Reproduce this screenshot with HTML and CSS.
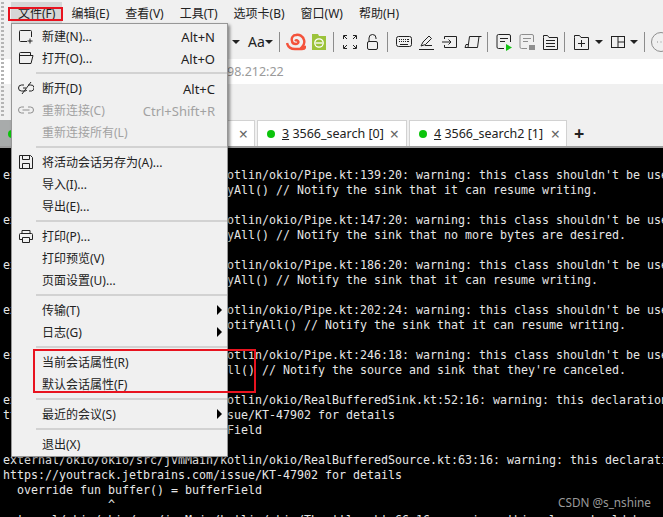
FILE: index.html
```html
<!DOCTYPE html>
<html lang="zh">
<head>
<meta charset="utf-8">
<title>Xshell</title>
<link rel="stylesheet" href="styles.css">
</head>
<body>
<div class="app">
  <header class="chrome">
    <nav class="menubar">
      <span class="mi on">文件(F)</span><span class="mi">编辑(E)</span><span class="mi">查看(V)</span><span class="mi">工具(T)</span><span class="mi">选项卡(B)</span><span class="mi">窗口(W)</span><span class="mi">帮助(H)</span>
    </nav>
    <div class="toolbar">
      <i class="caret first"></i>
      <span class="aa">Aa</span>
      <i class="caret"></i>
      <i class="sep"></i>
      <span class="cell"><svg width="20" height="18" viewBox="0 0 20 18"><path d="M1 10c1 4 4 6 8 6h7c2 0 3-1 3-2h-3c2-2 3-4 2-7-1-4-5-6-8-5-3 0-5 3-4 6 0 2 2 3 4 3s3-2 2-3-2-1-3 0" fill="none" stroke="#f4523b" stroke-width="2.4"/></svg></span>
      <span class="cell"><svg width="18" height="18" viewBox="0 0 18 18"><path d="M2 1h6l1 2h7v14H2z" fill="#9cc33b"/><circle cx="9" cy="10" r="4.2" fill="none" stroke="#fff" stroke-width="1.3"/><path d="M5.500 10h7" stroke="#fff" stroke-width="1.3"/></svg></span>
      <i class="sep"></i>
      <span class="cell"><svg width="18" height="18" viewBox="0 0 18 18" class="ln"><path d="M2.500 6V2.500H6M12 2.500h3.500V6M2.500 12v3.500H6M15.500 12v3.500H12M3 3l3 3M15 3l-3 3M3 15l3-3M15 15l-3-3"/></svg></span>
      <span class="cell"><svg width="18" height="18" viewBox="0 0 18 18" class="ln"><rect x="3.500" y="8.500" width="10" height="8" rx="1.500"/><path d="M5 8.500V5a3.500 3.500 0 0 1 7 0v1"/></svg></span>
      <i class="sep"></i>
      <span class="cell"><svg width="18" height="18" viewBox="0 0 18 18" class="ln"><rect x="1.500" y="3.500" width="15" height="10" rx="2"/><path d="M4 6.500h1M6 6.500h1M8 6.500h1M10 6.500h1M12 6.500h2M4 8.500h1M6 8.500h1M8 8.500h1M10 8.500h1M12 8.500h2M5 11.500h8"/></svg></span>
      <span class="cell"><svg width="18" height="18" viewBox="0 0 18 18" class="ln"><path d="M1 16.500h15M3 13l2-4 6-6 2.500 2.500-6 6zM7 12.500h7"/></svg></span>
      <span class="cell"><svg width="18" height="18" viewBox="0 0 18 18" class="ln"><path d="M3.500 6V3.500h12v11h-12V12M1 9h9M7.500 6.500 10 9l-2.500 2.500"/></svg></span>
      <span class="cell"><svg width="18" height="18" viewBox="0 0 18 18" class="ln"><path d="M5.500 3.500h12M5.500 3.500 4 14.500h9.500L15 3.500M4 14.500H1l1-3h2"/></svg></span>
      <i class="sep"></i>
      <span class="cell"><svg width="18" height="18" viewBox="0 0 18 18" class="ln"><path d="M9 15.500H3.500a1.500 1.500 0 0 1-1.500-1.500V3a1.500 1.500 0 0 1 1.500-1.500h10.500A1.500 1.500 0 0 1 15.500 3v6M5 5.500h8M5 8.500h5"/><path d="M11 11l6 3.500-6 3.500z" fill="#14c414" stroke="none"/></svg></span>
      <span class="cell"><svg width="18" height="18" viewBox="0 0 18 18" class="ln dim"><path d="M9 15.500H3.500a1.500 1.500 0 0 1-1.500-1.500V3a1.500 1.500 0 0 1 1.500-1.500h10.500A1.500 1.500 0 0 1 15.500 3v6M5 5.500h8M5 8.500h5"/><rect x="11" y="12" width="6" height="5" fill="#8e8e8e" stroke="none"/></svg></span>
      <span class="cell"><svg width="18" height="18" viewBox="0 0 18 18" class="ln"><path d="M2.500 4.500V16.500h14V4.500H8l-1.500-2h-4zM5 7.500h9M5 10.500h9M5 13.500h9"/></svg></span>
      <i class="sep"></i>
      <span class="cell"><svg width="18" height="18" viewBox="0 0 18 18" class="ln"><path d="M2.500 4.500V16.500h14V4.500H9l-1.500-2h-5zM9.500 7v7M6 10.500h7"/></svg></span>
      <i class="caret after-folder"></i>
      <span class="cell after-caret"><svg width="18" height="18" viewBox="0 0 18 18" class="ln"><rect x="2.500" y="3.500" width="13" height="11"/><path d="M9 3.500v11M9 9h6.500"/></svg></span>
      <i class="caret"></i>
      <i class="sep"></i>
      <span class="cell"><svg width="22" height="22" viewBox="0 0 22 22" class="ln dim"><circle cx="11" cy="11" r="9.500"/><path d="M7 11h1M10.500 11h1M14 11h1"/></svg></span>
    </div>
    <div class="address">98.212:22</div>
    <div class="spacer"></div>
    <div class="tabs">
      <div class="tab active"><i class="dot"></i></div>
      <div class="tab t2"><span class="x">×</span></div>
      <div class="tab t3"><i class="dot"></i><span class="label"><u>3</u> 3566_search [0]</span><span class="x">×</span></div>
      <div class="tab t4"><i class="dot"></i><span class="label"><u>4</u> 3566_search2 [1]</span><span class="x">×</span></div>
      <span class="plus">+</span>
    </div>
  </header>
  <pre class="terminal">

external/okio/okio/src/jvmMain/kotlin/okio/Pipe.kt:139:20: warning: this class shouldn't be used in Kotlin
                           notifyAll() // Notify the sink that it can resume writing.

external/okio/okio/src/jvmMain/kotlin/okio/Pipe.kt:147:20: warning: this class shouldn't be used in Kotlin
                           notifyAll() // Notify the sink that no more bytes are desired.

external/okio/okio/src/jvmMain/kotlin/okio/Pipe.kt:186:20: warning: this class shouldn't be used in Kotlin
                           notifyAll() // Notify the sink that it can resume writing.

external/okio/okio/src/jvmMain/kotlin/okio/Pipe.kt:202:24: warning: this class shouldn't be used in Kotlin
                               notifyAll() // Notify the sink that it can resume writing.

external/okio/okio/src/jvmMain/kotlin/okio/Pipe.kt:246:18: warning: this class shouldn't be used in Kotlin
                         notifyAll() // Notify the source and sink that they're canceled.

external/okio/okio/src/jvmMain/kotlin/okio/RealBufferedSink.kt:52:16: warning: this declaration is deprecated
ttps://youtrack.jetbrains.com/issue/KT-47902 for details
  override fun buffer() = bufferField

external/okio/okio/src/jvmMain/kotlin/okio/RealBufferedSource.kt:63:16: warning: this declaration is deprecated
https://youtrack.jetbrains.com/issue/KT-47902 for details
  override fun buffer() = bufferField
               ^
external/okio/okio/src/jvmMain/kotlin/okio/Throttler.kt:66:16: warning: this class should be used</pre>

  <div class="menu">
    <div class="row"><span class="ico"><svg width="16" height="16" viewBox="0 0 16 16" class="ln"><path d="M9 13.500H2.500a1 1 0 0 1-1-1v-9a1 1 0 0 1 1-1h10a1 1 0 0 1 1 1V9M12 10.500v5M9.500 13h5"/></svg></span><span>新建(N)...</span><span class="key">Alt+N</span></div>
    <div class="row"><span class="ico"><svg width="16" height="16" viewBox="0 0 16 16" class="ln"><path d="M1.500 13.500v-10a1 1 0 0 1 1-1h10v3M1.500 5.500h13.500l-2 8h-11.500"/></svg></span><span>打开(O)...</span><span class="key">Alt+O</span></div>
    <div class="rule"></div>
    <div class="row"><span class="ico"><svg width="16" height="16" viewBox="0 0 16 16" class="ln"><path d="M6 5H3.500a3 3 0 0 0 0 6H7a3 3 0 0 0 2-1M5 8h3M10 5h2.500a3 3 0 0 1 1 6H11M4 14 13 2"/></svg></span><span>断开(D)</span><span class="key">Alt+C</span></div>
    <div class="row off"><span class="ico"><svg width="16" height="16" viewBox="0 0 16 16" class="ln dim"><path d="M6 5H3.500a3 3 0 0 0 0 6H6M10 5h2.500a3 3 0 0 1 0 6H10M4.500 8h7"/></svg></span><span>重新连接(C)</span><span class="key">Ctrl+Shift+R</span></div>
    <div class="row off"><span class="ico"></span><span>重新连接所有(L)</span></div>
    <div class="rule"></div>
    <div class="row"><span class="ico"><svg width="16" height="16" viewBox="0 0 16 16" class="ln"><path d="M1.500 1.500h11l2 2v11h-13zM4.500 1.500v4h7v-4M4.500 14.500v-5h7v5"/></svg></span><span>将活动会话另存为(A)...</span></div>
    <div class="row"><span class="ico"></span><span>导入(I)...</span></div>
    <div class="row"><span class="ico"></span><span>导出(E)...</span></div>
    <div class="rule"></div>
    <div class="row"><span class="ico"><svg width="16" height="16" viewBox="0 0 16 16" class="ln"><path d="M4 5.500v-3h8v3M4 11.500H1.500v-5a1 1 0 0 1 1-1h11a1 1 0 0 1 1 1v5H12M4.500 9.500h7v5h-7z"/></svg></span><span>打印(P)...</span></div>
    <div class="row"><span class="ico"></span><span>打印预览(V)</span></div>
    <div class="row"><span class="ico"></span><span>页面设置(U)...</span></div>
    <div class="rule"></div>
    <div class="row"><span class="ico"></span><span>传输(T)</span><i class="arrow"></i></div>
    <div class="row"><span class="ico"></span><span>日志(G)</span><i class="arrow"></i></div>
    <div class="rule"></div>
    <div class="row"><span class="ico"></span><span>当前会话属性(R)</span></div>
    <div class="row"><span class="ico"></span><span>默认会话属性(F)</span></div>
    <div class="rule"></div>
    <div class="row"><span class="ico"></span><span>最近的会议(S)</span><i class="arrow"></i></div>
    <div class="rule"></div>
    <div class="row"><span class="ico"></span><span>退出(X)</span></div>
  </div>
  <div class="mark mark-file"></div>
  <div class="mark mark-props"></div>
  <div class="watermark">CSDN @s_nshine</div>
</div>
</body>
</html>
```
FILE: styles.css
```css
* { box-sizing: border-box; }
html, body { margin: 0; padding: 0; height: 100%; overflow: hidden; }
body { background: #000; font-family: "Noto Sans", "Noto Sans CJK SC", sans-serif; font-size: 12px; color: #222; }
.app { position: relative; width: 663px; height: 517px; overflow: hidden; display: flex; flex-direction: column; }
.chrome { position: relative; height: 148px; background: #f0f0f0; flex: none; }
.chrome::before { content: ""; position: absolute; left: 1px; top: 2px; width: 3px; height: 116px; background: repeating-linear-gradient(to bottom, #b4b4b4 0 2px, transparent 2px 4px); }

.menubar { height: 24px; display: flex; gap: 2px; padding: 2px 0 0 11px; }
.mi { height: 21px; padding: 3px 7px 0; line-height: 18px; white-space: nowrap; }
.mi.on { background: #d6d6d6; }

.toolbar { height: 35px; display: flex; align-items: center; padding-left: 232px; }
.caret { flex: none; width: 8px; height: 4px; margin-top: 1px; border-top: 4px solid #222; border-left: 4px solid transparent; border-right: 4px solid transparent; }
.caret.first { margin-right: 8px; }
.caret.after-folder { margin-left: 2px; }
.cell.after-caret { margin-left: 4px; }
.aa { width: 19px; font-size: 14px; line-height: 20px; white-space: nowrap; }
.sep { flex: none; width: 1px; height: 20px; background: #8c8c8c; margin: 0 5px 0 6px; }
.cell + .sep { margin-left: 2px; }
.cell { flex: none; width: 23px; height: 24px; display: flex; align-items: center; justify-content: center; }
.cell svg { display: block; flex: none; }
.ln { fill: none; stroke: #222; stroke-width: 1; display: block; }
.ln.dim { stroke: #8e8e8e; }

.address { height: 25px; background: #fff; padding-left: 227px; font-size: 12.5px; line-height: 25px; color: #9a9a9a; }
.spacer { height: 36px; }

.tabs { height: 28px; display: flex; gap: 2px; border-bottom: 2px solid #9c9c9c; align-items: stretch; }
.tab { background: #fff; border: 1px solid #d2d2d2; border-bottom: 0; display: flex; align-items: center; white-space: nowrap; }
.tab.active { width: 120px; background: #a8abab; border-color: #a8abab; padding-left: 7px; }
.tab.t2 { width: 133px; justify-content: flex-end; padding-right: 6px; }
.tab.t3 { width: 150px; padding-left: 9px; }
.tab.t4 { width: 158px; padding-left: 9px; }
.dot { flex: none; width: 8px; height: 8px; border-radius: 50%; background: #0cc40c; }
.label { margin-left: 7px; font-size: 12.5px; }
.x { margin-left: auto; margin-right: 6px; font-size: 16px; line-height: 16px; color: #666; }
.t3 .x { margin-right: 7px; }
.t2 .x { margin-right: 0; }
.plus { margin-left: 5px; font-size: 18px; font-weight: 700; line-height: 26px; color: #222; }

.terminal { flex: 1; margin: 0; padding: 5px 0 0 3px; background: #000; color: #e6e6e6; font-family: "DejaVu Sans Mono", monospace; font-size: 11.63px; line-height: 15px; overflow: hidden; white-space: pre; }

.menu { position: absolute; left: 11px; top: 23px; width: 217px; height: 434px; padding: 1px 0; background: #f0f0f0; border: 1px solid #979797; box-shadow: 2px 2px 3px rgba(0,0,0,.45); }
.row { height: 22px; display: flex; align-items: center; padding: 2px 12px 0 0; line-height: 18px; white-space: nowrap; color: #222; }
.row.off { color: #a2a2a2; }
.ico { flex: none; width: 30px; display: flex; justify-content: center; margin-top: -2px; padding: 0 2px 0 0; }
.key { margin-left: auto; font-size: 13px; }
.arrow { margin-left: auto; margin-right: -7px; margin-top: -2px; width: 0; height: 0; border-left: 5px solid #000; border-top: 5px solid transparent; border-bottom: 5px solid transparent; }
.rule { height: 2px; margin: 3px 0 3px 24px; background: #d2d2d2; }

.mark { position: absolute; border: 2px solid #e8131f; }
.mark-file { left: 8px; top: 7px; width: 55px; height: 14px; }
.mark-props { left: 33px; top: 349px; width: 223px; height: 44px; }
.watermark { position: absolute; left: 558px; top: 493px; font-size: 11.75px; line-height: 18px; color: #9a9a9a; white-space: nowrap; }
```
